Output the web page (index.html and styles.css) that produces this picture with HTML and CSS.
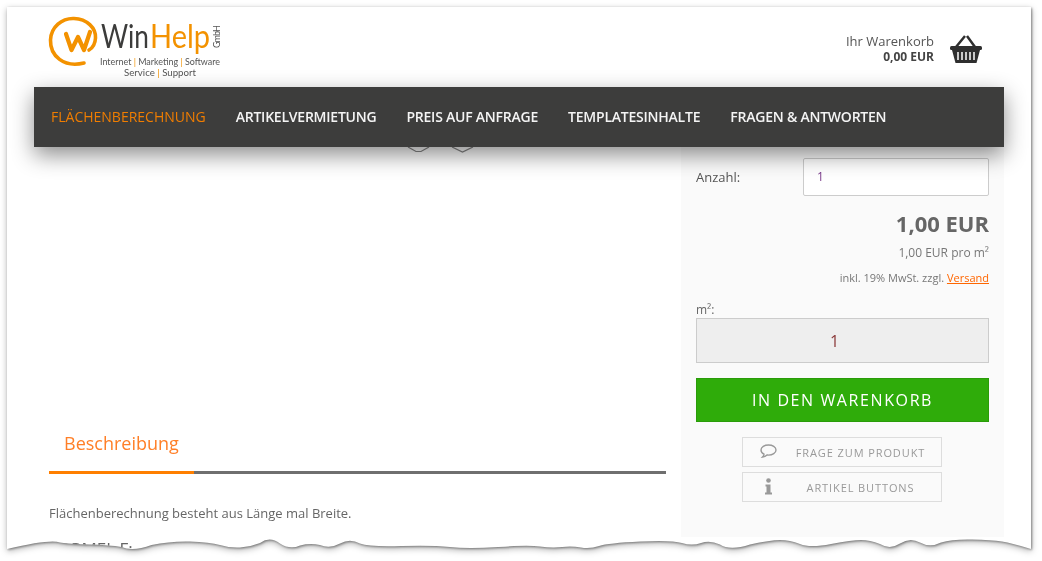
FILE: index.html
```html
<!DOCTYPE html>
<html lang="de">
<head>
<meta charset="UTF-8">
<title>Flächenberechnung - WinHelp</title>
<link rel="stylesheet" href="styles.css">
</head>
<body>
<div class="sheet-shadow">
<div class="sheet">

    <header class="site-head">
        <svg class="logo" width="176" height="64" viewBox="48 14 176 64">
            <path class="logo-ring" d="M84 63 C64 68 50 56 50.500 40 C51 27 62 18 74 18.500 C87 19 96 28 95.500 38 C95.200 44 92.500 48 89 50"/>
            <path class="logo-w" d="M66 34 L71.500 50 L78 37 L84 50 L90 32"/>
            <text class="logo-name logo-win" x="101" y="47.500" textLength="48" lengthAdjust="spacingAndGlyphs">Win</text>
            <text class="logo-name logo-help" x="150" y="47.500" textLength="60" lengthAdjust="spacingAndGlyphs">Help</text>
            <text class="logo-gmbh" transform="translate(220 48) rotate(-90)" textLength="23">GmbH</text>
            <text class="logo-tag" x="100" y="64.500" textLength="120" lengthAdjust="spacingAndGlyphs">Internet <tspan class="logo-bar">|</tspan> Marketing <tspan class="logo-bar">|</tspan> Software</text>
            <text class="logo-tag" x="124" y="75.500" textLength="72" lengthAdjust="spacingAndGlyphs">Service <tspan class="logo-bar">|</tspan> Support</text>
        </svg>
        <div class="cart">
            <div class="cart-text">
                <div class="cart-label">Ihr Warenkorb</div>
                <div class="cart-sum">0,00 EUR</div>
            </div>
            <svg class="cart-icon" width="32" height="29" viewBox="0 0 32 29">
                <path class="cart-handle" d="M6 12 L15 1 M25 12 L17 1"/>
                <rect x="0" y="11" width="32" height="4" rx="1.500"/>
                <path d="M2 15 H30 L26.500 28 H5.500 Z"/>
                <path class="cart-slats" d="M8 17 V25 M12 17 V25 M16 17 V25 M20 17 V25 M24 17 V25"/>
            </svg>
        </div>
    </header>

    <nav class="main-nav">
        <a class="nav-link active" href="#">FLÄCHENBERECHNUNG</a>
        <a class="nav-link" href="#">ARTIKELVERMIETUNG</a>
        <a class="nav-link" href="#">PREIS AUF ANFRAGE</a>
        <a class="nav-link" href="#">TEMPLATESINHALTE</a>
        <a class="nav-link" href="#">FRAGEN &amp; ANTWORTEN</a>
    </nav>

    <div class="product">
        <div class="product-left">
            <div class="thumb-arrows">
                <svg width="23" height="6" viewBox="0 0 23 6"><path d="M1 0 L9 4.500 H14 L22 0"/></svg>
                <svg width="23" height="6" viewBox="0 0 23 6"><path d="M1 0 L11.500 5 L22 0"/></svg>
            </div>
            <div class="tabs">
                <div class="tab active">Beschreibung</div>
            </div>
            <p class="desc">Flächenberechnung besteht aus Länge mal Breite.</p>
            <h3 class="desc-head">FORMEL F:</h3>
        </div>

        <aside class="buy-box">
            <div class="qty-row">
                <label class="qty-label">Anzahl:</label>
                <div class="qty-input">1</div>
            </div>
            <div class="price">1,00 EUR</div>
            <div class="price-unit">1,00 EUR pro m²</div>
            <div class="price-tax">inkl. 19% MwSt. zzgl. <a href="#">Versand</a></div>
            <div class="area-label">m²:</div>
            <div class="area-value">1</div>
            <button class="btn-cart">IN DEN WARENKORB</button>
            <a class="btn-small" href="#">
                <span class="btn-icon">
                    <svg width="17" height="14" viewBox="0 0 17 14"><path class="icon-line" d="M8.500 1 C4.500 1 1 3 1 6 C1 8 2.500 9.500 4 10.200 C3.900 11.300 3.300 12.200 2.500 13 C4.500 12.800 6 12 7 11 C7.500 11 8 11.100 8.500 11.100 C12.500 11.100 16 9 16 6 C16 3 12.500 1 8.500 1 Z"/></svg>
                </span>
                <span class="btn-text">FRAGE ZUM PRODUKT</span>
            </a>
            <a class="btn-small" href="#">
                <span class="btn-icon">
                    <svg width="17" height="17" viewBox="0 0 17 17"><circle class="icon-fill" cx="8.500" cy="2.500" r="2.300"/><path class="icon-fill" d="M5.500 6.500 H10.500 V14.500 H12 V16.500 H5 V14.500 H6.500 V8.500 H5.500 Z"/></svg>
                </span>
                <span class="btn-text">ARTIKEL BUTTONS</span>
            </a>
        </aside>
    </div>

</div>
</div>
</body>
</html>
```

FILE: styles.css
```css
* {
    box-sizing: border-box;
}

html, body {
    margin: 0;
    height: 100%;
    background: #fff;
    overflow: hidden;
}

body {
    font-family: "Open Sans", "Liberation Sans", sans-serif;
    color: #666;
}

a {
    text-decoration: none;
}

/* torn paper look of the screenshot */
.sheet-shadow {
    margin: 7px 0 0 7px;
    width: 1024px;
    height: 554px;
    filter: drop-shadow(1px 1px 1px rgba(0,0,0,0.4)) drop-shadow(0 2px 3px rgba(0,0,0,0.3));
}

.sheet {
    width: 1024px;
    height: 554px;
    background: #fff;
    clip-path: path("M0 0 H1024 V542 Q1005 536 995 534.500 Q985 533 965 532.500 Q945 532 934 535.500 Q923 541 913 535.500 Q903 530 893 536.500 Q883 543 873 537 Q863 533 854 533 Q845 533 824 537 Q803 541 793 537 Q783 533 773 533 Q763 533 743 537.500 Q723 544 713 537.500 Q703 533 694 536 Q685 539 675 536 Q665 533 633 534.500 Q601 536 592 539 Q583 542 574 540.500 Q565 539 555 540 Q545 541 533 539.500 Q521 538 491 540 Q461 542 443 540 Q425 538 394 539 Q363 540 353 536.500 Q343 531 333 536.500 Q323 542 313 538 Q303 536 293 538.500 Q283 543 273 536.500 Q263 529 253 536 Q243 540 233 540.500 Q223 541 213 538 Q203 535 183 534.500 Q163 534 144.500 538 Q126 545 114.500 540 Q103 538 83 537.500 Q63 537 53 535.500 Q43 532 0 542 Z");
}

/* header */
.site-head {
    height: 80px;
    display: flex;
    justify-content: space-between;
    padding: 7px 49px 0 41px;
}

.logo {
    display: block;
}

.logo-ring, .logo-w {
    fill: none;
    stroke: #f39200;
    stroke-linecap: round;
    stroke-linejoin: round;
}

.logo-ring {
    stroke-width: 3.600;
}

.logo-w {
    stroke-width: 4.200;
}

.logo-name {
    font-family: "Lato", sans-serif;
    font-size: 32px;
    font-weight: 400;
}

.logo-win {
    fill: #3c3c3b;
}

.logo-help {
    fill: #f39200;
}

.logo-gmbh {
    font-family: "Lato", sans-serif;
    font-size: 9px;
    fill: #555;
}

.logo-tag {
    font-family: "Lato", sans-serif;
    font-size: 9px;
    fill: #555;
}

.logo-bar {
    fill: #f39200;
}

.cart {
    display: flex;
    gap: 16px;
    padding-top: 19px;
}

.cart-text {
    text-align: right;
}

.cart-label {
    font-size: 13px;
    line-height: 16px;
    color: #555;
}

.cart-sum {
    font-size: 12px;
    font-weight: 700;
    line-height: 15px;
    color: #444;
}

.cart-icon {
    margin-top: 2px;
    fill: #2f2f2f;
}

.cart-handle {
    fill: none;
    stroke: #2f2f2f;
    stroke-width: 2.500;
}

.cart-slats {
    fill: none;
    stroke: #fff;
    stroke-width: 1.500;
}

/* nav */
.main-nav {
    position: relative;
    z-index: 2;
    display: flex;
    align-items: center;
    gap: 30px;
    width: 970px;
    height: 60px;
    margin-left: 27px;
    padding: 0 0 2px 17px;
    background: #3d3d3c;
    box-shadow: 0 8px 22px rgba(0,0,0,0.45);
}

.nav-link {
    font-size: 14px;
    font-weight: 600;
    letter-spacing: -0.230px;
    color: #f4f4f4;
}

.nav-link.active {
    font-weight: 500;
    letter-spacing: 0;
    color: #f07d00;
}

/* product area */
.product {
    display: flex;
    gap: 15px;
    padding-left: 42px;
}

.product-left {
    width: 617px;
}

.thumb-arrows {
    display: flex;
    gap: 21px;
    margin-left: 358px;
    height: 6px;
}

.thumb-arrows path {
    fill: none;
    stroke: #888;
    stroke-width: 1.200;
}

.tabs {
    margin-top: 277px;
    border-bottom: 3px solid #6f6f6f;
}

.tab {
    width: 145px;
    margin-bottom: -3px;
    padding: 0 15px 14px;
    font-size: 18px;
    line-height: 27px;
    color: #ff7f27;
    border-bottom: 3px solid #ff7f00;
}

.desc {
    margin: 29px 0 0;
    font-size: 13px;
    line-height: 20px;
}

.desc-head {
    margin: 14px 0 0;
    font-size: 17px;
    font-weight: 400;
    line-height: 24px;
}

.buy-box {
    width: 323px;
    height: 390px;
    padding: 11px 15px 0;
    background: #fafafa;
}

.qty-row {
    display: flex;
    align-items: center;
    justify-content: space-between;
}

.qty-label {
    font-size: 13px;
    color: #555;
}

.qty-input {
    width: 186px;
    height: 38px;
    padding-left: 13px;
    font-size: 12px;
    line-height: 36px;
    color: #7a3a8a;
    background: #fff;
    border: 1px solid #ccc;
    border-radius: 2px;
}

.price, .price-unit, .price-tax {
    text-align: right;
}

.price {
    margin-top: 13px;
    font-size: 22px;
    font-weight: 700;
    line-height: 28px;
    color: #666;
}

.price-unit {
    margin-top: 7px;
    font-size: 12px;
    line-height: 18px;
    color: #777;
}

.price-tax {
    margin-top: 8px;
    font-size: 11px;
    line-height: 16px;
    color: #777;
}

.price-tax a {
    color: #f60;
    text-decoration: underline;
}

.area-label {
    margin-top: 16px;
    font-size: 12px;
    line-height: 16px;
    color: #666;
}

.area-value {
    height: 45px;
    padding-right: 16px;
    font-size: 16px;
    line-height: 45px;
    text-align: center;
    color: #8b3a3a;
    background: #eee;
    border: 1px solid #ccc;
}

.btn-cart {
    display: block;
    width: 100%;
    height: 44px;
    margin-top: 15px;
    font-family: inherit;
    font-size: 16px;
    letter-spacing: 1.600px;
    color: #fff;
    background: #2fac0a;
    border: 1px solid #2a9c09;
}

.btn-small {
    display: flex;
    align-items: center;
    width: 200px;
    height: 30px;
    margin: 5px 0 0 46px;
    font-size: 11px;
    letter-spacing: 0.900px;
    color: #999;
    border: 1px solid #ddd;
}

.btn-cart + .btn-small {
    margin-top: 15px;
}

.btn-icon {
    display: flex;
    width: 37px;
    padding-left: 17px;
    margin-top: -2px;
}

.btn-text {
    flex: 1;
    text-align: center;
}

.icon-line {
    fill: none;
    stroke: #999;
    stroke-width: 1.400;
}

.icon-fill {
    fill: #999;
}
```
